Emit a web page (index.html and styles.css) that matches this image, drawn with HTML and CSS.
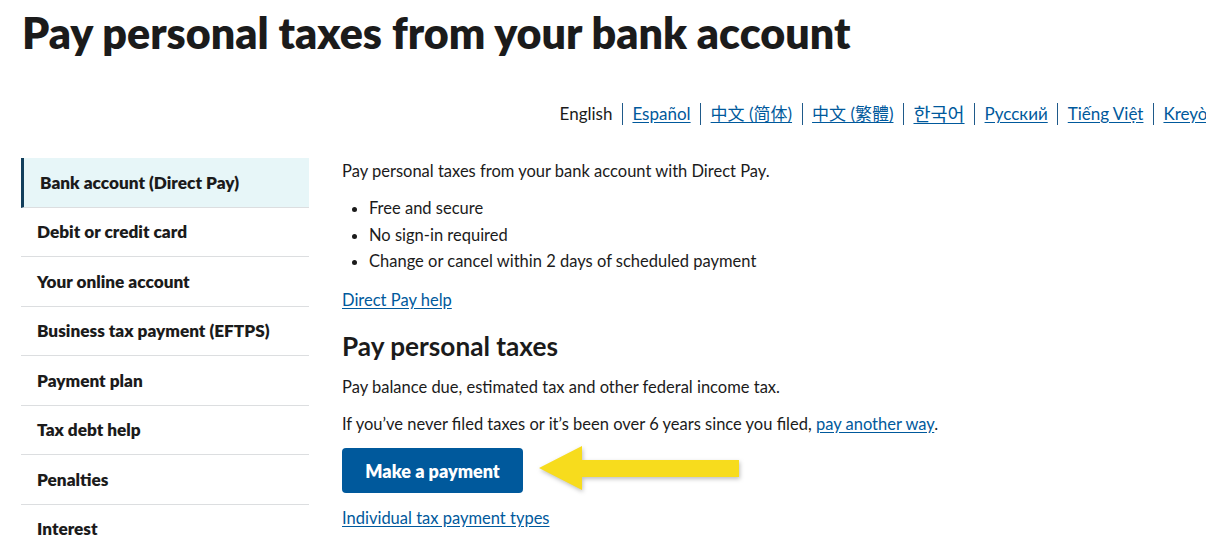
FILE: index.html
```html
<!DOCTYPE html>
<html lang="en">
<head>
<meta charset="utf-8">
<title>Pay personal taxes from your bank account</title>
<link rel="stylesheet" href="styles.css">
</head>
<body>
<div class="page">
  <h1 class="title">Pay personal taxes from your bank account</h1>
  <nav class="langs">
    <span class="lang current">English</span>
    <a class="lang" href="#">Español</a>
    <a class="lang" href="#">中文 (简体)</a>
    <a class="lang" href="#">中文 (繁體)</a>
    <a class="lang ko" href="#">한국어</a>
    <a class="lang" href="#">Русский</a>
    <a class="lang" href="#">Tiếng Việt</a>
    <a class="lang" href="#">Kreyòl</a>
  </nav>
  <div class="layout">
    <ul class="sidenav">
      <li class="side-item active">Bank account (Direct Pay)</li>
      <li class="side-item">Debit or credit card</li>
      <li class="side-item">Your online account</li>
      <li class="side-item">Business tax payment (EFTPS)</li>
      <li class="side-item">Payment plan</li>
      <li class="side-item">Tax debt help</li>
      <li class="side-item">Penalties</li>
      <li class="side-item">Interest</li>
    </ul>
    <main class="main">
      <p class="lead">Pay personal taxes from your bank account with Direct Pay.</p>
      <ul class="bullets">
        <li>Free and secure</li>
        <li>No sign-in required</li>
        <li>Change or cancel within 2 days of scheduled payment</li>
      </ul>
      <p class="help"><a href="#">Direct Pay help</a></p>
      <h2 class="subtitle">Pay personal taxes</h2>
      <p class="para">Pay balance due, estimated tax and other federal income tax.</p>
      <p class="para">If you’ve never filed taxes or it’s been over 6 years since you filed, <a href="#">pay another way</a>.</p>
      <div class="action-row">
        <a class="btn" href="#">Make a payment</a>
        <svg class="arrow" width="204" height="52" viewBox="0 0 204 52" aria-hidden="true">
          <polygon points="0,23 43,1 43,15 200,15 200,32 43,32 43,45" fill="#f7dc1d"/>
        </svg>
      </div>
      <p class="types"><a href="#">Individual tax payment types</a></p>
    </main>
  </div>
</div>
</body>
</html>
```

FILE: styles.css
```css
html, body {
  margin: 0;
  padding: 0;
  overflow: hidden;
  background: #ffffff;
}
body {
  font-family: Lato, "Noto Sans CJK SC", sans-serif;
  color: #1b1b1b;
}
.page {
  padding-left: 22px;
  margin-right: -15px;
}
.title {
  margin: 0;
  padding-top: 8px;
  font-size: 43px;
  line-height: 50px;
  font-weight: 800;
  letter-spacing: 0;
}
.langs {
  display: flex;
  justify-content: flex-end;
  align-items: center;
  margin-top: 45px;
  font-size: 17px;
  line-height: 22px;
}
.lang {
  padding: 0 9.5px;
  border-left: 1px solid #1f5a8a;
  color: #00599c;
  text-decoration: underline;
  text-underline-offset: 2px;
}
.lang.ko {
  font-size: 18.5px;
}
.lang.current {
  border-left: none;
  color: #1b1b1b;
  text-decoration: none;
}
.layout {
  display: flex;
  margin-top: 33px;
}
.sidenav {
  list-style: none;
  margin: 0;
  padding: 0;
  width: 288px;
  flex: none;
  margin-left: -1px;
}
.side-item {
  padding: 0 16px;
  height: 48.5px;
  display: flex;
  align-items: center;
  border-bottom: 1px solid #dcdee0;
  font-weight: 800;
  font-size: 17.2px;
}
.side-item.active {
  background: #e7f6f8;
  border-left: 3px solid #123f5c;
  padding-left: 16px;
}
.main {
  margin-left: 33px;
  font-size: 16.5px;
  line-height: 26px;
}
.main p {
  margin: 0;
}
.main a {
  color: #00599c;
  text-underline-offset: 2px;
}
.bullets {
  margin: 11px 0 0;
  padding-left: 27px;
  line-height: 26.5px;
}
.help {
  margin-top: 12px !important;
}
.subtitle {
  margin: 17px 0 0;
  font-size: 26.2px;
  line-height: 32px;
  font-weight: 700;
}
.para {
  margin-top: 12px !important;
}
.para + .para {
  margin-top: 11px !important;
}
.action-row {
  display: flex;
  align-items: center;
  gap: 16px;
  margin-top: 8px;
}
.btn {
  display: inline-flex;
  align-items: center;
  justify-content: center;
  width: 181px;
  height: 45px;
  background: #00599c;
  color: #ffffff !important;
  text-decoration: none;
  font-weight: 800;
  font-size: 18px;
  border-radius: 4px;
}
.arrow {
  filter: drop-shadow(1px 2px 2px rgba(0, 0, 0, 0.25));
}
.types {
  margin-top: 8px !important;
}
```
